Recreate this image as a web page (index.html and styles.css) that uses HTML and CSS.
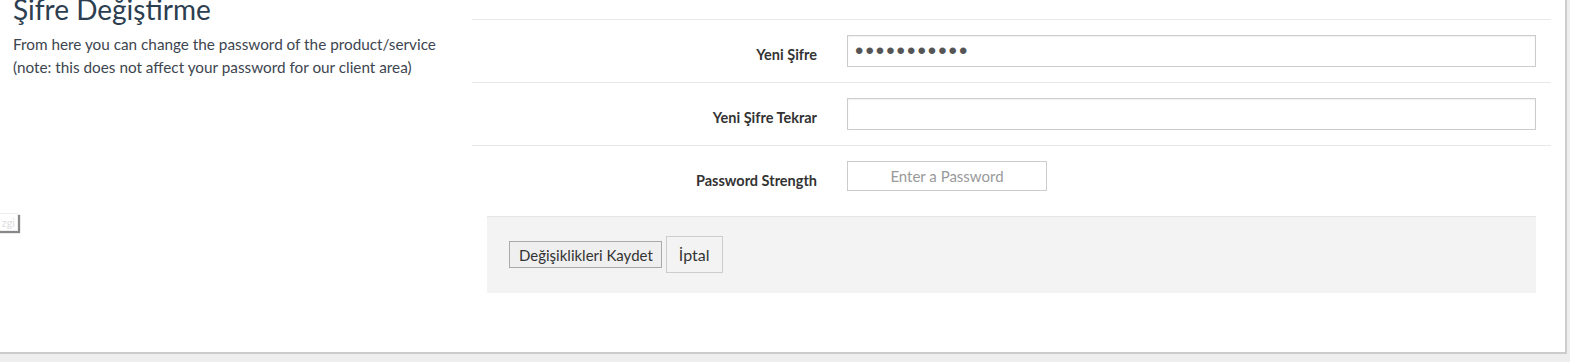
FILE: index.html
```html
<!DOCTYPE html>
<html lang="tr">
<head>
  <meta charset="UTF-8">
  <meta name="viewport" content="width=device-width, initial-scale=1">
  <title>Şifre Değiştirme</title>
  <link rel="stylesheet" href="styles.css">
</head>
<body>
  <div class="panel">
    <div class="intro">
      <h1>Şifre Değiştirme</h1>
      <p>From here you can change the password of the product/service<br>(note: this does not affect your password for our client area)</p>
    </div>

    <form class="form">
      <div class="row">
        <label>Mevcut Şifre</label>
        <div class="field"><div class="static"></div></div>
      </div>
      <div class="row">
        <label for="newpw">Yeni Şifre</label>
        <div class="field"><input type="password" id="newpw" value="abcdefghijk"></div>
      </div>
      <div class="row">
        <label for="newpw2">Yeni Şifre Tekrar</label>
        <div class="field"><input type="password" id="newpw2"></div>
      </div>
      <div class="row last">
        <label>Password Strength</label>
        <div class="field"><div class="strength">Enter a Password</div></div>
      </div>

      <div class="actions">
        <button type="button" class="btn-save">Değişiklikleri Kaydet</button>
        <button type="button" class="btn-cancel">İptal</button>
      </div>
    </form>
  </div>

  <div class="hint">zgi</div>
</body>
</html>
```

FILE: styles.css
```css
body {
  font-family: 'Lato', 'Open Sans', sans-serif;
  background: #eeeeee;
  margin: 0;
  padding: 0;
  overflow: hidden;
}
.panel {
  display: flex;
  width: 1567px;
  height: 397px;
  margin-top: -43px;
  background: #ffffff;
  border-right: 2px solid #cccccc;
  border-bottom: 2px solid #cccccc;
  box-sizing: border-box;
}
.intro {
  width: 472px;
  padding-left: 13px;
  box-sizing: border-box;
}
.intro h1 {
  font-weight: normal;
  font-size: 28px;
  line-height: 30px;
  color: #2c3e50;
  margin: 37px 0 0;
}
.intro p {
  font-size: 15.3px;
  line-height: 23px;
  color: #3d4550;
  margin: 9px 0 0;
}
.form {
  width: 1079px;
}
.row {
  display: flex;
  padding: 15px 0;
  border-bottom: 1px solid #e8e8e8;
}
.row.last {
  border-bottom: none;
  padding-bottom: 25px;
}
.row label {
  width: 360px;
  padding: 10px 15px 0 0;
  box-sizing: border-box;
  text-align: right;
  font-weight: bold;
  font-size: 14.5px;
  line-height: 20px;
  color: #333;
}
.field {
  flex: 1;
  padding: 0 15px;
}
.static {
  height: 32px;
}
.field input {
  width: 100%;
  height: 32px;
  box-sizing: border-box;
  border: 1px solid #cccccc;
  box-shadow: inset 0 1px 2px rgba(0,0,0,0.06);
  padding: 0 7px;
  font-family: 'Liberation Sans', sans-serif;
  font-size: 24px;
  letter-spacing: 2px;
  color: #555;
}
.strength {
  width: 200px;
  height: 30px;
  box-sizing: border-box;
  border: 1px solid #cccccc;
  text-align: center;
  font-size: 15px;
  line-height: 28px;
  color: #999;
}
.actions {
  margin: 0 15px;
  padding: 19px 21px 20px 22px;
  background: #f3f3f3;
  border-top: 1px solid #e5e5e5;
  display: flex;
  align-items: center;
  gap: 4px;
}
.btn-save {
  font-family: 'Lato', 'Open Sans', sans-serif;
  font-size: 15px;
  color: #333;
  height: 27px;
  padding: 0 8px 0 9px;
  background: #efefef;
  border: 1px solid #aaaaaa;
}
.btn-cancel {
  font-family: 'Lato', 'Open Sans', sans-serif;
  font-size: 16px;
  color: #333;
  height: 37px;
  padding: 0 12px;
  background: #f3f3f3;
  border: 1px solid #cccccc;
}
.hint {
  position: absolute;
  left: -8px;
  top: 213px;
  width: 26px;
  height: 18px;
  background: #fff;
  border: 1px solid #eee;
  box-shadow: 2px 2px 1px #888;
  font-size: 11px;
  line-height: 18px;
  color: #ddd;
  text-align: right;
  padding-right: 2px;
  box-sizing: border-box;
}
```
